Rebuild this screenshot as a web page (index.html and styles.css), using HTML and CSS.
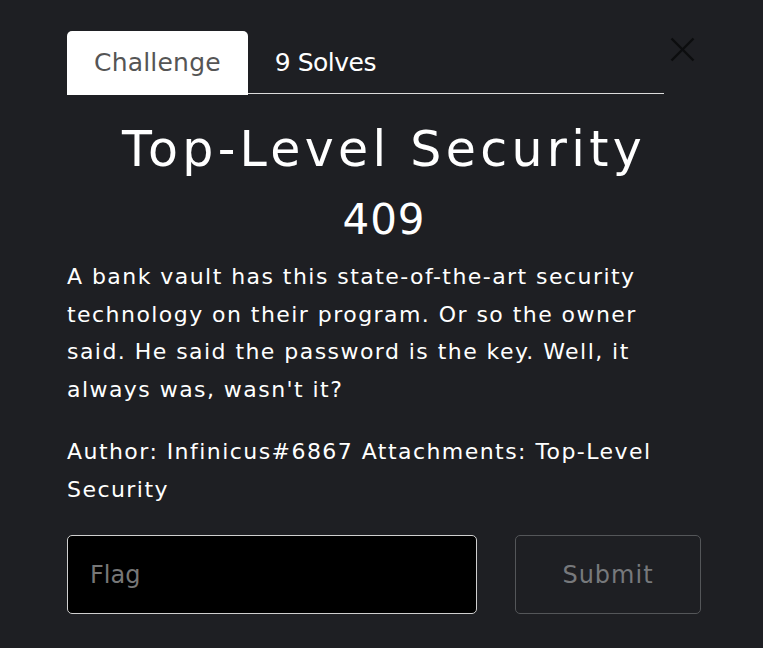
FILE: index.html
```html
<!DOCTYPE html>
<html lang="en">
<head>
<meta charset="utf-8">
<title>Top-Level Security</title>
<link rel="stylesheet" href="styles.css">
</head>
<body>
<div class="modal">
  <div class="modal-header">
    <nav class="tabs">
      <a class="tab active">Challenge</a>
      <a class="tab solves">9 Solves</a>
    </nav>
    <button class="close" aria-label="Close">
      <svg width="25" height="25" viewBox="0 0 25 25"><path d="M1.5 1.5L23.5 23.5M23.5 1.5L1.5 23.5" stroke="currentColor" stroke-width="2.4" fill="none"/></svg>
    </button>
  </div>
  <h2 class="title">Top-Level Security</h2>
  <h3 class="value">409</h3>
  <p class="desc">A bank vault has this state-of-the-art security technology on their program. Or so the owner said. He said the password is the key. Well, it always was, wasn't it?</p>
  <p class="desc author">Author: Infinicus#6867 Attachments: Top-Level Security</p>
  <form class="flag-row">
    <input class="flag-input" type="text" placeholder="Flag">
    <button class="submit" type="button">Submit</button>
  </form>
</div>
</body>
</html>
```
FILE: styles.css
```css
html, body {
  margin: 0;
  padding: 0;
  background: #1e1f23;
  color: #ffffff;
  font-family: "DejaVu Sans", sans-serif;
}
.modal {
  width: 634px;
  padding: 31px 0 0 67px;
}
.modal-header {
  display: flex;
  align-items: flex-start;
}
.tabs {
  flex: 1;
  display: flex;
  height: 62px;
  border-bottom: 1px solid #dcdcdc;
}
.tab {
  display: block;
  height: 64px;
  box-sizing: border-box;
  padding: 0 27px;
  font-size: 25px;
  line-height: 64px;
  color: #ffffff;
  border-radius: 5px 5px 0 0;
}
.tab.active {
  background: #ffffff;
  color: #555555;
  padding: 0 27px 0 27px;
  letter-spacing: 0.2px;
}
.tab.solves {
  letter-spacing: -0.5px;
}
.close {
  width: 37px;
  height: 40px;
  padding: 6px 0 0 6px;
  margin: 0;
  border: 0;
  background: transparent;
  color: #0c0d0f;
  display: flex;
  align-items: flex-start;
  justify-content: flex-start;
}
.title {
  margin: 27px 0 0;
  font-size: 49px;
  line-height: 58px;
  font-weight: normal;
  letter-spacing: 4.3px;
  text-align: center;
}
.value {
  margin: 16px 0 0;
  font-size: 42px;
  line-height: 50px;
  font-weight: normal;
  letter-spacing: 1px;
  text-align: center;
}
.desc {
  margin: 13px 0 0;
  font-size: 22px;
  line-height: 37.5px;
  letter-spacing: 1.45px;
}
.author {
  margin-top: 25px;
}
.flag-row {
  display: flex;
  gap: 38px;
  margin-top: 27px;
}
.flag-input {
  width: 410px;
  height: 79px;
  box-sizing: border-box;
  margin: 0;
  padding: 0 22px;
  background: #000000;
  border: 1px solid #cfcfcf;
  border-radius: 5px;
  font-family: "DejaVu Sans", sans-serif;
  font-size: 24px;
  color: #ffffff;
  outline: none;
}
.flag-input::placeholder {
  color: #777777;
}
.submit {
  width: 186px;
  height: 79px;
  box-sizing: border-box;
  margin: 0;
  background: transparent;
  border: 1px solid #545659;
  border-radius: 5px;
  font-family: "DejaVu Sans", sans-serif;
  font-size: 24px;
  letter-spacing: 1px;
  color: #77797c;
}
```
